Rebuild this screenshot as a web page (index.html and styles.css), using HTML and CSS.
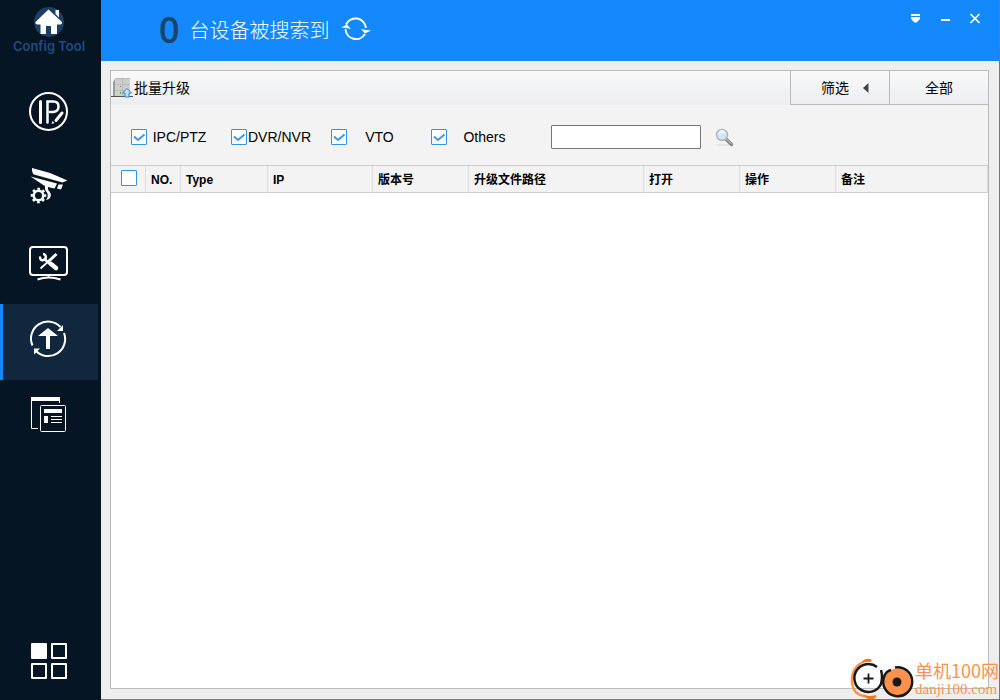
FILE: index.html
```html
<!DOCTYPE html>
<html lang="zh-CN">
<head>
<meta charset="utf-8">
<title>Config Tool</title>
<link rel="stylesheet" href="styles.css">
</head>
<body>
<div class="window">
  <aside class="sidebar">
    <div class="brand">
      <svg class="brand-icon" width="32" height="32" viewBox="33 6 32 32" aria-hidden="true">
        <circle cx="49" cy="22" r="15" fill="#1c3f66"/>
        <path d="M48.500 9.500L62 22q.5 2-1.500 2.500H57V34H51V26H46V34H40.500V24.500H37q-2-.5-1.500-2.500z" fill="#fff"/>
        <path d="M55.500 10h3.500v7.500l-3.500-3.500z" fill="#fff"/>
      </svg>
      <span class="brand-name">Config Tool</span>
    </div>
    <nav class="nav">
      <button class="nav-item" type="button" aria-label="IP">
        <svg viewBox="0 76 98 76" fill="none" stroke="#fff" stroke-linecap="round">
          <circle cx="48.500" cy="111.500" r="18.500" stroke-width="2"/>
          <path d="M40.500 101.500V122.500" stroke-width="3"/>
          <path d="M47.500 122.500V101.500H53.500Q58.500 101.500 58.500 106.500T53.500 112H50" stroke-width="2.500"/>
          <path d="M56 120.500L62 113" stroke-width="3"/>
          <path d="M51.500 124l1-3 2 2z" fill="#fff" stroke="none"/>
        </svg>
      </button>
      <button class="nav-item" type="button" aria-label="Camera">
        <svg viewBox="0 152 98 76" fill="#fff">
          <path d="M32 168L50 173 67.500 180.500 62.500 182.500 34 174.500Q31.500 172 32 168z"/>
          <path d="M30.500 176.500L57 183.500Q56 186 54.500 188.500L50 187.500 44 185.500z"/>
          <path d="M58.500 184.500H63L61 189.500 57 188.500z"/>
          <path d="M45 185h3.500q-1.500 5 1 6.500 3 4-.5 7.500l-3 1q3-4 1-7.500-2.500-2-2-7.500z"/>
          <circle cx="38.500" cy="195.500" r="4.800" fill="none" stroke="#fff" stroke-width="2.600"/>
          <circle cx="38.500" cy="195.500" r="6.700" fill="none" stroke="#fff" stroke-width="2.200" stroke-dasharray="2.631 2.631" stroke-dashoffset="1.315"/>
        </svg>
      </button>
      <button class="nav-item" type="button" aria-label="Maintenance">
        <svg viewBox="0 228 98 76" fill="none" stroke="#fff">
          <rect x="30" y="247" width="37" height="28" rx="3" stroke-width="2"/>
          <path d="M37.500 279.500Q48.500 275.500 60.500 279.500M48.500 275v3" stroke-width="2"/>
          <path d="M40.500 268.500L51 259" stroke-width="1.800"/>
          <path d="M49 261L56.500 254" stroke-width="3"/>
          <path d="M40 256.500q0 4.500 3.500 3.500 3-1 2-4.500-1-1.500-2.500-1.500" stroke-width="2.500"/>
          <path d="M45 259.500L50 264" stroke-width="2.500"/>
          <path d="M51 264L56 268" stroke-width="4.500" stroke-linecap="round"/>
        </svg>
      </button>
      <button class="nav-item nav-item-active" type="button" aria-label="Upgrade">
        <svg viewBox="0 304 98 76" fill="none" stroke="#fff" stroke-width="2">
          <path d="M32.500 345.500A17 17 0 0 1 60.500 327"/>
          <path d="M64 333A17 17 0 0 1 36 351"/>
          <path d="M63 325v6h-6zM34 354.500v-6h6z" fill="#fff" stroke="none"/>
          <path d="M48 328L58 336H50V349H46V336H38z" fill="#fff" stroke="none"/>
        </svg>
      </button>
      <button class="nav-item" type="button" aria-label="Templates">
        <svg viewBox="0 380 98 76" fill="none" stroke="#fff">
          <path d="M38 428.500H31.500V397.500H59.500V403"/>
          <path d="M31 397H60V401H31z" fill="#fff" stroke="none"/>
          <rect x="40.500" y="405.500" width="25" height="26" rx="1"/>
          <path d="M44 409h18v4H44zM44 416h4v7h-4zM51 416h11v1H51zM51 419h11v1H51zM51 422h11v1H51z" fill="#fff" stroke="none"/>
        </svg>
      </button>
    </nav>
    <button class="apps" type="button" aria-label="Apps">
      <svg width="38" height="38" viewBox="30 642 38 38" fill="none" stroke="#fff" stroke-width="2" stroke-linejoin="round">
        <rect x="32" y="644" width="14" height="14" fill="#fff"/>
        <rect x="52" y="644" width="14" height="14"/>
        <rect x="32" y="664" width="14" height="14"/>
        <rect x="52" y="664" width="14" height="14"/>
      </svg>
    </button>
  </aside>

  <div class="main">
    <header class="topbar">
      <span class="count">0</span>
      <span class="count-label">台设备被搜索到</span>
      <button class="icon-button" type="button" aria-label="刷新">
        <svg width="30" height="26" viewBox="342 18 30 26" fill="none" stroke="#fff" stroke-width="2">
          <path d="M347 25.500A10.500 10.500 0 0 1 367 29"/>
          <path d="M366 35A10.500 10.500 0 0 1 346.500 30"/>
          <path d="M342 28.500l6-3 4 4.500-5-1zM372 31.500l-6 3-4-4.500 5 1z" fill="#fff" stroke="none"/>
        </svg>
      </button>
      <div class="window-controls">
        <button class="icon-button" type="button" aria-label="菜单">
          <svg width="12" height="12" viewBox="0 0 12 12" fill="#fff"><path d="M1 1h9v2H1zM1 4h9v2L6.500 9.500h-2L1 6z"/></svg>
        </button>
        <button class="icon-button" type="button" aria-label="最小化">
          <svg width="12" height="12" viewBox="0 0 12 12" fill="#fff"><path d="M1 6h9v2H1z"/></svg>
        </button>
        <button class="icon-button" type="button" aria-label="关闭">
          <svg width="12" height="12" viewBox="0 0 12 12" fill="none" stroke="#fff" stroke-width="1.600"><path d="M.5 1L9.500 10M9.500 1L.5 10"/></svg>
        </button>
      </div>
    </header>

    <main class="content">
      <section class="panel">
        <div class="toolbar">
          <button class="batch" type="button">
            <svg width="22" height="20" viewBox="0 0 22 20" aria-hidden="true">
              <path d="M0 18.500h22" stroke="#555"/>
              <path d="M2 4l2-3v17H2z" fill="#9b9b9b"/>
              <path d="M4 0h15v18H4z" fill="#cecece"/>
              <path d="M4.500 .5h14M4 6.500h15M4 12.500h15M11.500 0v18" stroke="#bbb" fill="none"/>
              <path d="M9 8h1v1H9z" fill="#777"/>
              <path d="M9 14h1v2H9z" fill="#2bd52b"/>
              <path d="M16 10.500l4.500 4.500H18v4h-4v-4h-2.500z" fill="#bfe4fa" stroke="#3185cc"/>
            </svg>
            <span>批量升级</span>
          </button>
          <button class="tool-button tool-button-filter" type="button">
            <span>筛选</span>
            <svg width="6" height="10" viewBox="0 0 6 10" aria-hidden="true"><path d="M5.500 0v10L0 5z" fill="#444"/></svg>
          </button>
          <button class="tool-button" type="button">全部</button>
        </div>

        <form class="filters">
          <label class="filter"><input class="check" type="checkbox" checked><span class="filter-name">IPC/PTZ</span></label>
          <label class="filter"><input class="check" type="checkbox" checked><span class="filter-name">DVR/NVR</span></label>
          <label class="filter"><input class="check" type="checkbox" checked><span class="filter-name">VTO</span></label>
          <label class="filter filter-wide"><input class="check" type="checkbox" checked><span class="filter-name">Others</span></label>
          <input class="search" type="text" aria-label="搜索">
          <button class="icon-button" type="button" aria-label="搜索">
            <svg width="20" height="20" viewBox="0 -1 20 20" fill="none">
              <ellipse cx="9" cy="17" rx="8" ry="1" fill="#e4e4e4"/>
              <path d="M11 11L16.500 16.500" stroke="#888" stroke-width="3.500" stroke-linecap="round"/>
              <path d="M11.500 11L16.500 16" stroke="#c4c4c4" stroke-linecap="round"/>
              <circle cx="7" cy="7" r="5.500" fill="#d3e6f7" stroke="#b0b5ba" stroke-width="1.500"/>
              <path d="M3 7q4-3 8-1-1-4-4-4T3 7z" fill="#eef6fd"/>
            </svg>
          </button>
        </form>

        <table class="devices">
          <colgroup>
            <col class="col-check"><col class="col-no"><col class="col-type"><col class="col-ip"><col class="col-text"><col class="col-path"><col class="col-text"><col class="col-text"><col>
          </colgroup>
          <thead>
            <tr>
              <th class="cell-check"><input class="check" type="checkbox" aria-label="全选"></th>
              <th>NO.</th>
              <th>Type</th>
              <th>IP</th>
              <th>版本号</th>
              <th>升级文件路径</th>
              <th>打开</th>
              <th>操作</th>
              <th>备注</th>
            </tr>
          </thead>
          <tbody></tbody>
        </table>
      </section>
    </main>
  </div>

  <div class="watermark">
    <svg width="66" height="42" viewBox="850 658 66 42" fill="none" aria-hidden="true">
      <path d="M862 663Q852 669 853 682T866 696Q874 700 877 696" stroke="#ff914d" stroke-width="2.500"/>
      <path d="M861 664q4-6 10-5 3 1 1 3-5-1-11 2zM864 695q6 2 13 0-1 4-6 4-4 0-7-4z" fill="#ff7316"/>
      <path d="M878 667A14 14 0 1 0 882 684Q884 677 882 670" stroke="#181818" stroke-width="2.500"/>
      <path d="M869.500 673.500v10M864.500 678.500h10" stroke="#181818" stroke-width="1.800"/>
      <circle cx="898.500" cy="682" r="13.500" fill="#ff914d"/>
      <path d="M896 667.500A14.500 14.500 0 1 1 885 677Q887 671 892 670" stroke="#181818" stroke-width="2.500"/>
      <circle cx="898" cy="682" r="4.500" fill="#181818"/>
    </svg>
    <div class="watermark-text">
      <span class="watermark-name">单机100网</span>
      <span class="watermark-site">danji100.com</span>
    </div>
  </div>
</div>
</body>
</html>
```

FILE: styles.css
```css
* {
  box-sizing: border-box;
}

body {
  margin: 0;
  font-family: "Liberation Sans", "Noto Sans CJK SC", sans-serif;
  font-size: 14px;
  color: #000;
}

button {
  margin: 0;
  padding: 0;
  border: 0;
  background: none;
  font: inherit;
  color: inherit;
}

svg {
  display: block;
}

.window {
  position: relative;
  display: flex;
  min-height: 100vh;
  background: #eee;
}

.sidebar {
  flex: none;
  display: flex;
  flex-direction: column;
  width: 101px;
  background: #061523;
}

.brand {
  display: flex;
  flex-direction: column;
  align-items: center;
  height: 76px;
  padding: 6px 3px 0 0;
}

.brand-name {
  font-family: Inter, sans-serif;
  font-size: 13px;
  line-height: 17px;
  font-weight: 600;
  color: #1f4c80;
  white-space: nowrap;
}

.nav {
  display: flex;
  flex-direction: column;
}

.nav-item {
  width: 98px;
  height: 76px;
}

.nav-item-active {
  background: linear-gradient(to right, #1389fd 3px, #11273e 3px);
}

.apps {
  margin: auto auto 20px 30px;
}

.main {
  flex: 1;
  display: flex;
  flex-direction: column;
  min-width: 0;
  border-right: 1px solid #777;
  border-bottom: 1px solid #777;
}

.topbar {
  display: flex;
  align-items: center;
  height: 61px;
  padding: 0 17px 2px 58px;
  background: #1389fd;
}

.count {
  font-family: "Open Sans", sans-serif;
  font-size: 36px;
  font-weight: 600;
  line-height: 58px;
  color: #1c4468;
}

.count-label {
  margin: 0 11px 0 10px;
  font-family: "Noto Sans CJK SC", sans-serif;
  font-size: 20px;
  font-weight: 300;
  line-height: 30px;
  color: #fff;
}

.window-controls {
  display: flex;
  gap: 18px;
  align-self: flex-start;
  margin-left: auto;
  padding-top: 13px;
}

.content {
  flex: 1;
  display: flex;
  padding: 9px 10px 10px 9px;
}

.panel {
  flex: 1;
  min-width: 0;
  border: 1px solid #bbb;
  background: #fff;
}

.toolbar {
  display: flex;
  height: 34px;
  line-height: 20px;
  background: linear-gradient(#f9f9f9, #ebedf0);
}

.batch {
  display: flex;
  align-items: center;
  gap: 1px;
  margin-right: auto;
}

.tool-button {
  display: flex;
  align-items: center;
  justify-content: center;
  gap: 14px;
  width: 99px;
  border-left: 1px solid #bbb;
  border-bottom: 1px solid #bbb;
}

.tool-button-filter {
  padding-left: 10px;
}

.filters {
  display: flex;
  align-items: center;
  height: 60px;
  padding: 4px 20px 0;
  background: #f3f3f3;
}

.filter {
  display: flex;
  align-items: center;
  width: 100px;
}

.filter-name {
  width: 65px;
  text-align: center;
}

.filter-wide {
  width: 120px;
}

.filter-wide .filter-name {
  width: 75px;
}

.check {
  appearance: none;
  flex: none;
  width: 16px;
  height: 16px;
  margin: 0;
  border: 1px solid #3094ef;
  border-radius: 1px;
  background: #fff;
}

.check:checked {
  background: #fff url("data:image/svg+xml,%3Csvg xmlns='http://www.w3.org/2000/svg' viewBox='0 0 14 14'%3E%3Cpath d='M2 6.500L6 10 12.500 4.500' fill='none' stroke='%233d97ec' stroke-width='2'/%3E%3C/svg%3E") center / 14px 14px no-repeat;
}

.search {
  width: 150px;
  height: 24px;
  margin-right: 14px;
  padding: 0 4px;
  border: 1px solid #777;
  border-radius: 1px;
  background: #fff;
  font: inherit;
}

.devices {
  width: 100%;
  table-layout: fixed;
  border-spacing: 0;
  border-top: 1px solid #ccc;
}

.devices th {
  height: 27px;
  padding: 2px 5px 0;
  border-right: 1px solid #ddd;
  border-bottom: 1px solid #ccc;
  background: #f3f3f3;
  font-size: 12px;
  line-height: 18px;
  text-align: left;
  white-space: nowrap;
}

.devices .cell-check {
  padding: 0 0 2px 10px;
}

.cell-check .check {
  display: block;
}

.col-check {
  width: 35px;
}

.col-no {
  width: 35px;
}

.col-type {
  width: 87px;
}

.col-ip {
  width: 105px;
}

.col-text {
  width: 96px;
}

.col-path {
  width: 175px;
}

.watermark {
  position: absolute;
  right: 1px;
  bottom: 0;
  display: flex;
  color: #ff914d;
}

.watermark-text {
  display: flex;
  flex-direction: column;
}

.watermark-name {
  font-family: "Noto Sans CJK SC", sans-serif;
  font-size: 18px;
  line-height: 24px;
}

.watermark-site {
  font-family: "Liberation Serif", serif;
  font-size: 15px;
  line-height: 14px;
}
```
